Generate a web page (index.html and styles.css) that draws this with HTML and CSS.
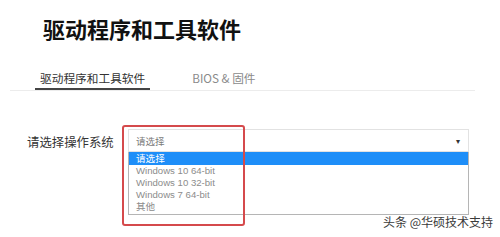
FILE: index.html
```html
<!DOCTYPE html>
<html lang="zh-CN">
<head>
<meta charset="utf-8">
<title>驱动程序和工具软件</title>
<link rel="stylesheet" href="styles.css">
</head>
<body>
<div class="page">
  <h1 class="title">驱动程序和工具软件</h1>
  <div class="tabs">
    <div class="tab active">驱动程序和工具软件</div>
    <div class="tab">BIOS &amp; 固件</div>
  </div>
  <div class="form-row">
    <label class="label">请选择操作系统</label>
    <div class="select-wrap">
      <div class="select">
        <span class="placeholder">请选择</span>
        <span class="arrow">&#9662;</span>
      </div>
      <ul class="dropdown">
        <li class="opt selected">请选择</li>
        <li class="opt">Windows 10 64-bit</li>
        <li class="opt">Windows 10 32-bit</li>
        <li class="opt">Windows 7 64-bit</li>
        <li class="opt">其他</li>
      </ul>
      <div class="highlight-box"></div>
    </div>
  </div>
  <div class="watermark">头条 @华硕技术支持</div>
</div>
</body>
</html>
```

FILE: styles.css
```css
html, body {
  margin: 0;
  padding: 0;
  background: #ffffff;
}
.page {
  position: relative;
  width: 500px;
  height: 237px;
  overflow: hidden;
  font-family: "Noto Sans CJK SC", "Liberation Sans", sans-serif;
}
.title {
  margin: 13px 0 0 43px;
  font-size: 22px;
  line-height: 30px;
  font-weight: 700;
  color: #111111;
  letter-spacing: 0;
}
.tabs {
  display: flex;
  gap: 37px;
  margin: 25px 0 0 10px;
  width: 465px;
  padding-left: 25px;
  box-sizing: border-box;
  border-bottom: 1px solid #ececec;
}
.tab {
  padding: 0 5px;
  font-size: 11.7px;
  line-height: 20px;
  color: #8a8a8a;
  border-bottom: 2px solid transparent;
}
.tab.active {
  color: #333333;
  border-bottom-color: #444444;
}
.form-row {
  display: flex;
  align-items: center;
  margin: 38px 0 0 27px;
}
.label {
  width: 101px;
  font-size: 12.4px;
  line-height: 18px;
  color: #333333;
  padding-top: 2px;
}
.select-wrap {
  position: relative;
  width: 341px;
}
.select {
  display: flex;
  align-items: center;
  justify-content: space-between;
  height: 23px;
  box-sizing: border-box;
  border: 1px solid #e2e2e2;
  padding: 0 8px 0 7px;
}
.placeholder {
  font-size: 9.5px;
  color: #7a7a7a;
}
.arrow {
  font-size: 8px;
  color: #333333;
  line-height: 8px;
}
.dropdown {
  position: absolute;
  top: 100%;
  left: 0;
  width: 341px;
  height: 63px;
  box-sizing: border-box;
  margin: 0;
  padding: 0;
  list-style: none;
  border: 1px solid #b5b5b5;
  border-top: none;
  background: #ffffff;
}
.opt {
  height: 12px;
  line-height: 12px;
  padding-left: 7px;
  font-family: "Liberation Sans", "Noto Sans CJK SC", sans-serif;
  font-size: 9.6px;
  color: #8c8c8c;
}
.opt.selected {
  height: 13px;
  line-height: 13px;
  background: #1e8ef8;
  color: #ffffff;
}
.highlight-box {
  position: absolute;
  left: -6px;
  top: -4px;
  width: 123px;
  height: 101px;
  box-sizing: border-box;
  border: 2px solid #d54a4c;
  border-radius: 3px;
}
.watermark {
  position: absolute;
  right: 7px;
  top: 214px;
  font-size: 12px;
  line-height: 16px;
  color: #3a3a3a;
  text-shadow: 0 0 2px #ffffff;
}
```
